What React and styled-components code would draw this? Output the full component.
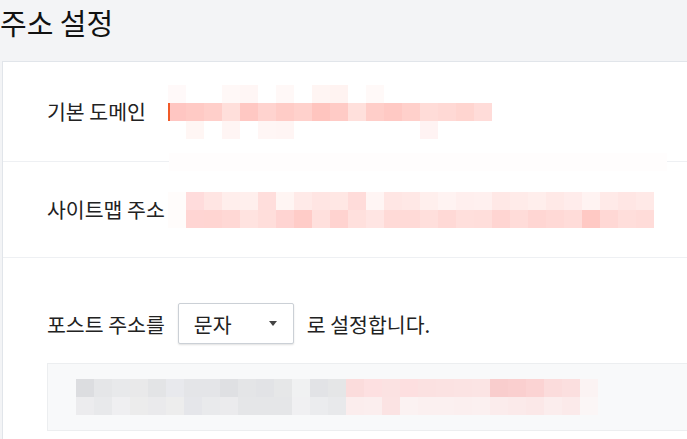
import React from "react"
import styled, { createGlobalStyle } from "styled-components"

const CELL = 18

// pixelated (redacted) values, one array per row of cells; null = empty cell
const domainCells = [
  ["#fff9f9", null, null, "#fff8f7", "#fff6f5", null, "#fff8f7", null, "#fff5f3", "#fff3f1", null, "#fff9f8", null, null, null, null, null, null],
  ["#ffc6c2", "#ffcac5", "#ffcfca", "#ffdfdb", "#ffc8c3", "#ffd3cf", "#ffccc7", "#ffd1cc", "#ffc5bf", "#ffcbc6", "#ffe0dc", "#ffcec9", "#ffc9c4", "#ffd0cb", "#ffdcd8", "#ffd9d5", "#ffd5d0", "#ffdcd9"],
  [null, "#fff6f4", null, "#fff5f4", null, "#fff6f5", "#fff5f4", null, null, null, null, null, null, null, "#fff3f3", null, null, null],
]

const sitemapCells = [
  ["#fffcfb", "#ffdcdc", "#ffe5e3", "#ffeeec", "#ffefed", "#ffdedc", "#fff5f3", "#ffeae8", "#ffe5e3", "#ffe7e4", "#ffdcda", "#fff5f4", "#ffe6e4", "#ffe8e6", "#ffefed", "#fff3f2", "#ffefee", "#fff0ef", "#ffe8e6", "#ffebe9", "#ffeeec", "#ffe9e7", "#ffeceb", "#fff3f2", "#ffeae8", "#ffe6e4", "#ffe9e7"],
  ["#fffcfb", "#ffd5d3", "#ffd5d2", "#ffd8d5", "#ffe3e0", "#ffdedb", "#ffd4d2", "#ffccc8", "#ffe0dd", "#ffd3d0", "#ffe0dd", "#ffe5e3", "#ffdad7", "#ffdad7", "#ffdfdc", "#ffd9d6", "#ffdfdc", "#ffdedb", "#ffd5d2", "#ffdcd9", "#ffd6d3", "#ffd9d6", "#ffdcd9", "#ffc9c4", "#ffd8d5", "#ffdedb", "#ffdcd9"],
]

const previewCells = [
  ["#dcdde0", "#e5e6e8", "#e8e9eb", "#e9e9ea", "#e3e4e6", "#e8e9ed", "#e4e5e8", "#e4e5e8", "#dfe0e3", "#e4e5e7", "#e2e3e6", "#e6e7e8", "#f0f1f2", "#e2e3e6", "#e5e6e7", "#fbdcdc", "#fde0e1", "#fbe2e2", "#fddfe0", "#fbe1e1", "#fbe2e2", "#fbe3e3", "#fbe4e4", "#f9cdcd", "#facfcf", "#fbd3d3", "#fbdcdc", "#fbdfdf", "#fbf3f3"],
  ["#ececee", "#e8e9eb", "#efeff1", "#ececec", "#eaeaec", "#ededed", "#e5e6ea", "#e9eaec", "#ebebed", "#e5e6e8", "#e5e6e8", "#e5e6e8", "#f0f0f2", "#ebecee", "#e8e9eb", "#fbeded", "#fbeeee", "#fbe3e3", "#fbf2f2", "#fbf0f0", "#fbf0f0", "#fbefef", "#fbf0f0", "#fbecec", "#fbeaea", "#fbe8e8", "#fbeded", "#fbeaea", "#fbf6f6"],
]

function Mosaic({ rows }) {
  const w = rows[0].length * CELL
  const h = rows.length * CELL
  return (
    <svg width={w} height={h} shapeRendering="crispEdges" style={{ display: "block" }}>
      {rows.map((row, r) =>
        row.map((c, i) =>
          c ? <rect key={r + "-" + i} x={i * CELL} y={r * CELL} width={CELL} height={CELL} fill={c} /> : null
        )
      )}
    </svg>
  )
}

function App() {
  return (
    <Page>
      <GlobalStyle />
      <Header>
        <Title>주소 설정</Title>
      </Header>
      <Card>
        <Row height={99}>
          <Label>기본 도메인</Label>
          <Value>
            <Mosaic rows={domainCells} />
            <Caret />
          </Value>
          <Smear />
        </Row>
        <Row height={95}>
          <Label>사이트맵 주소</Label>
          <Value>
            <Mosaic rows={sitemapCells} />
          </Value>
        </Row>
        <Section>
          <Sentence>
            <span>포스트 주소를</span>
            <Select>
              <span>문자</span>
              <Arrow />
            </Select>
            <span>로 설정합니다.</span>
          </Sentence>
          <Preview>
            <Mosaic rows={previewCells} />
          </Preview>
        </Section>
      </Card>
    </Page>
  )
}

export default App

const GlobalStyle = createGlobalStyle`
  html, body {
    margin: 0;
    padding: 0;
    overflow: hidden;
  }
`
const Page = styled.div`
  min-height: 100vh;
  background: #f3f4f6;
  font-family: "Noto Sans CJK KR", "Noto Sans", sans-serif;
  color: #222;
`
const Header = styled.header`
  height: 61px;
  box-sizing: border-box;
  padding-top: 0;
`
const Title = styled.h1`
  margin: 0;
  font-size: 29px;
  font-weight: 400;
  line-height: 44px;
  color: #111;
`
const Card = styled.div`
  margin-left: 2px;
  margin-right: -20px;
  min-height: calc(100vh - 61px);
  box-sizing: border-box;
  background: #fff;
  border-top: 1px solid #e1e5ea;
  border-left: 1px solid #e1e5ea;
`
const Row = styled.div`
  position: relative;
  display: flex;
  align-items: center;
  height: ${(p) => p.height}px;
  padding-left: 44px;
  border-bottom: 1px solid #eef0f3;
`
const Label = styled.span`
  flex: 0 0 121px;
  white-space: nowrap;
  font-size: 20.5px;
  line-height: 1;
`
const Value = styled.div`
  position: relative;
`
const Caret = styled.span`
  position: absolute;
  left: 0;
  top: 18px;
  width: 2px;
  height: 18px;
  background: #f05a28;
`
const Smear = styled.span`
  position: absolute;
  left: 166px;
  bottom: -10px;
  width: 498px;
  height: 18px;
  background: #fffdfd;
`
const Section = styled.div`
  padding: 45px 0 0 44px;
`
const Sentence = styled.div`
  display: flex;
  align-items: center;
  gap: 13px;
  font-size: 20.5px;
`
const Select = styled.div`
  display: flex;
  align-items: center;
  justify-content: space-between;
  box-sizing: border-box;
  width: 116px;
  height: 41px;
  padding: 0 16px 0 15px;
  border: 1px solid #cbd0d6;
  border-radius: 2px;
  box-shadow: 0 1px 2px rgba(0, 0, 0, 0.12);
  background: #fff;
`
const Arrow = styled.span`
  width: 0;
  height: 0;
  border-left: 4.5px solid transparent;
  border-right: 4.5px solid transparent;
  border-top: 5px solid #444;
`
const Preview = styled.div`
  margin-top: 19px;
  padding: 15px 28px;
  background: #f8f9fa;
  border: 1px solid #eceef0;
`
